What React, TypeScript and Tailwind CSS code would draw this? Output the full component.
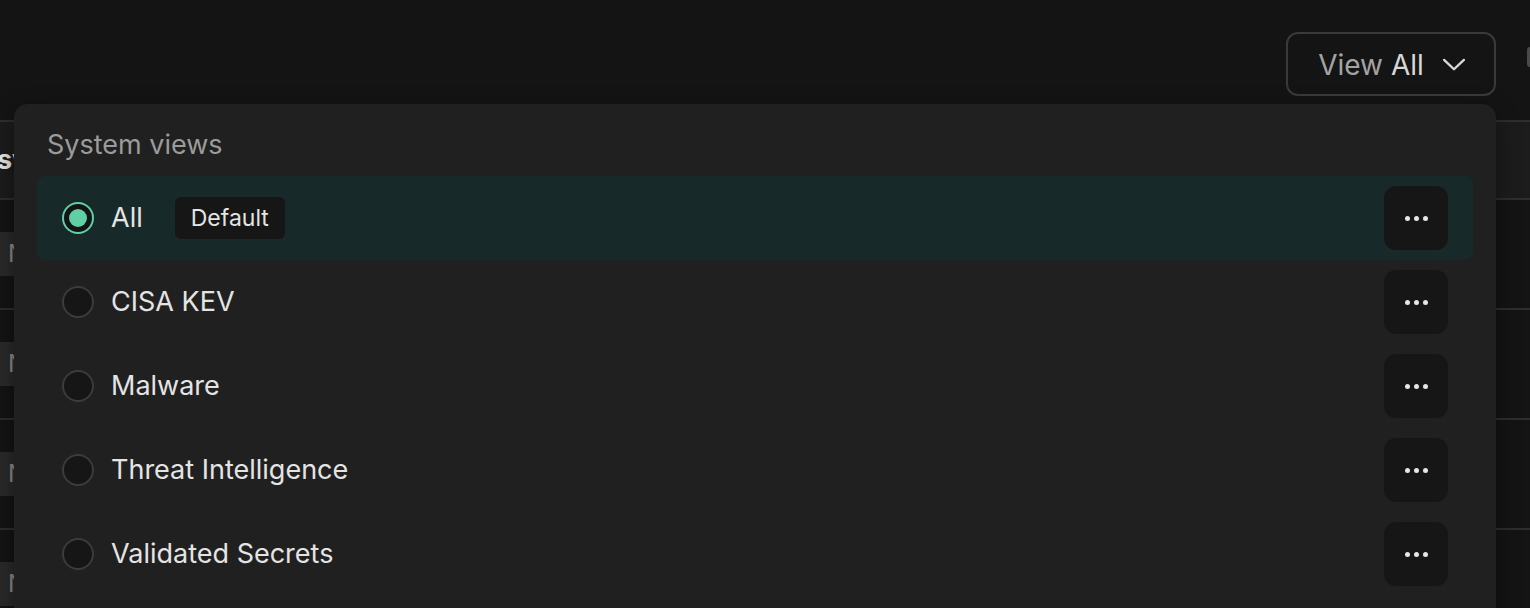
import React from 'react'

const views = [
  { name: 'All', isDefault: true, selected: true },
  { name: 'CISA KEV' },
  { name: 'Malware' },
  { name: 'Threat Intelligence' },
  { name: 'Validated Secrets' },
]

const Radio = ({ checked }: { checked?: boolean }) => (
  <span
    className={
      checked
        ? 'flex h-8 w-8 items-center justify-center rounded-full border-2 border-[#5fcfa5] bg-[#141414]'
        : 'flex h-8 w-8 items-center justify-center rounded-full border-2 border-[#3b3b3b] bg-[#161616]'
    }
  >
    {checked && <span className="h-[18px] w-[18px] rounded-full bg-[#5fcfa5]" />}
  </span>
)

const DotsButton = () => (
  <button className="flex h-16 w-16 items-center justify-center gap-[4px] rounded-[12px] bg-[#161616]">
    <span className="h-[5px] w-[5px] rounded-full bg-[#e6e6e6]" />
    <span className="h-[5px] w-[5px] rounded-full bg-[#e6e6e6]" />
    <span className="h-[5px] w-[5px] rounded-full bg-[#e6e6e6]" />
  </button>
)

const TableRow = () => (
  <div className="flex h-[110px] items-center border-b-2 border-[#2e2e2e]">
    <div className="flex h-[44px] w-[60px] items-center bg-[#2a2a2a] pl-[8px] text-[24px] text-[#8a8a8a]">
      N
    </div>
  </div>
)

export default function App() {
  return (
    <div
      className="relative h-[608px] w-[1530px] overflow-hidden bg-[#141414]"
      style={{ fontFamily: 'Inter, "Noto Sans", sans-serif' }}
    >
      {/* top bar */}
      <div className="flex h-[120px] items-start justify-end pt-[32px]">
        <button className="flex h-16 w-[210px] items-center justify-center gap-[16px] rounded-[12px] border-2 border-[#3a3a3a] bg-[#141414] pl-[4px] text-[28px]">
          <span className="pt-[1px]">
            <span className="text-[#a3a3a3]">View </span>
            <span className="text-[#d8d8d8]">All</span>
          </span>
          <svg width="28" height="28" viewBox="0 0 24 24" fill="none" stroke="#d8d8d8" strokeWidth="2" strokeLinecap="round" strokeLinejoin="round">
            <path d="M3.5 8.5l8.5 8 8.5-8" />
          </svg>
        </button>
        <div className="-mr-[3px] ml-[31px] mt-[15px] h-[20px] w-[6px] rounded-sm bg-[#4a4a4a]" />
      </div>

      {/* table behind */}
      <div className="border-t-2 border-[#2e2e2e]">
        <div className="flex h-[78px] items-center border-b-2 border-[#2e2e2e] bg-[#1c1c1c] text-[27px] font-bold text-[#e8e8e8]">
          <span className="-ml-[3px]">sv</span>
        </div>
        <TableRow />
        <TableRow />
        <TableRow />
        <TableRow />
      </div>

      {/* view menu */}
      <div className="absolute left-[14px] top-[104px] h-[540px] w-[1482px] rounded-[14px] bg-[#202020] px-[23px] pt-[21px] shadow-[0_8px_24px_rgba(0,0,0,0.45)]">
        <div className="mb-[11px] h-[40px] pl-[10px] text-[27px] leading-[40px] text-[#9b9b9b]">System views</div>
        <div className="flex flex-col">
          {views.map((v) => (
            <div
              key={v.name}
              className={
                v.selected
                  ? 'flex h-[84px] items-center rounded-[8px] bg-[#18292a] pl-[25px] pr-[24px]'
                  : 'flex h-[84px] items-center rounded-[8px] pl-[25px] pr-[24px]'
              }
            >
              <Radio checked={v.selected} />
              <span className="ml-[17px] pt-[1px] text-[27px] text-[#e4e4e4]">{v.name}</span>
              {v.isDefault && (
                <span className="ml-[32px] flex h-[42px] items-center rounded-[6px] bg-[#161616] px-[16px] text-[23px] text-[#e4e4e4]">
                  Default
                </span>
              )}
              <div className="ml-auto mr-[1px]">
                <DotsButton />
              </div>
            </div>
          ))}
        </div>
      </div>
    </div>
  )
}
